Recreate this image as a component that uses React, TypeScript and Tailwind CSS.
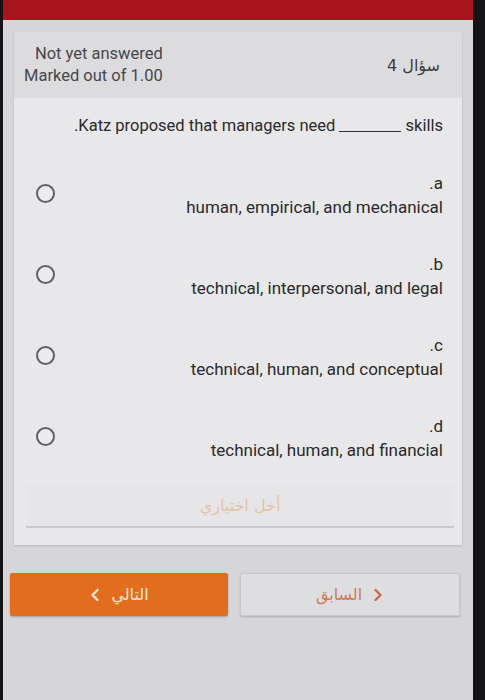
import React from 'react';

const options = [
  { key: 'a', text: 'human, empirical, and mechanical' },
  { key: 'b', text: 'technical, interpersonal, and legal' },
  { key: 'c', text: 'technical, human, and conceptual' },
  { key: 'd', text: 'technical, human, and financial' },
];

const Chevron = ({ dir, className }: { dir: 'left' | 'right'; className?: string }) => (
  <svg viewBox="0 0 12 16" className={className} fill="none" stroke="currentColor" strokeWidth="2.4" strokeLinecap="round" strokeLinejoin="round">
    {dir === 'left' ? <path d="M8.5 3 3.5 8l5 5" /> : <path d="M3.5 3l5 5-5 5" />}
  </svg>
);

const App = () => {
  return (
    <div className="h-[700px] w-[485px] bg-[#141416] pl-[3px] pr-[12px] font-['Roboto','DejaVu_Sans',sans-serif]">
      <div className="flex h-full flex-col bg-[#d6d6d9]">
        <div className="h-[20px] shrink-0 bg-[#a8151d]" />

        <div dir="rtl" className="mx-[11px] mt-[12px] bg-[#e8e8ea] shadow-[0_1px_2px_rgba(0,0,0,0.15)]">
          {/* header */}
          <div className="flex h-[66px] items-center justify-between bg-[#dcdcdf] pl-[10px] pr-[22px]">
            <div className="pt-[2px] text-[16px] text-[#3a3a3d] font-['DejaVu_Sans',sans-serif]">سؤال 4</div>
            <div dir="ltr" className="text-right text-[16.5px] leading-[22px] text-[#46464a]">
              <div>Not yet answered</div>
              <div>Marked out of 1.00</div>
            </div>
          </div>

          {/* body */}
          <div className="pl-[20px] pr-[19px] pt-[18px]">
            <p className="text-right text-[16.5px] leading-[20px] text-[#2a2a2c]">
              <span dir="ltr">.Katz proposed that managers need <span className="inline-block w-[62px] border-b-[1.5px] border-[#333] align-[-1px]" /> skills</span>
            </p>

            <div className="mt-[37px] flex flex-col gap-[37px]">
              {options.map((o) => (
                <div key={o.key} className="flex items-center justify-between">
                  <div className="text-right text-[17px] leading-[20px] text-[#2a2a2c]">
                    <div><span dir="ltr">.{o.key}</span></div>
                    <div className="mt-[4px]">{o.text}</div>
                  </div>
                  <div className="mt-[-4px] ml-[2px] h-[19px] w-[19px] rounded-full border-2 border-[#616165] bg-[#ececee]" />
                </div>
              ))}
            </div>
          </div>

          <div className="pb-[17px] pl-[12px] pr-[8px] pt-[25px]">
            <div className="flex h-[43px] items-center justify-center border-b-2 border-[#c9c9cc] bg-[#e6e6e8] text-[16px] text-[#e2c3a6] font-['DejaVu_Sans',sans-serif]">
              أخل اختياري
            </div>
          </div>
        </div>

        <div dir="rtl" className="ml-[7px] mr-[13px] mt-[28px] flex gap-[12px] font-['DejaVu_Sans',sans-serif]">
          <button className="flex h-[43px] flex-1 items-center justify-center gap-[10px] rounded-[2px] border border-[#c8c8cb] bg-[#dedee1] text-[16px] text-[#d27a52] shadow-[0_1px_2px_rgba(0,0,0,0.2)]">
            <Chevron dir="right" className="h-[16px] w-[12px] text-[#c96a3e]" />
            <span>السابق</span>
          </button>
          <button className="flex h-[43px] flex-1 items-center justify-center gap-[10px] rounded-[2px] bg-[#e26d1c] text-[16px] text-[#fbe8dc] shadow-[0_1px_2px_rgba(0,0,0,0.25)]">
            <span>التالي</span>
            <Chevron dir="left" className="h-[16px] w-[12px] text-[#fbe8dc]" />
          </button>
        </div>
      </div>
    </div>
  );
};

export default App;
